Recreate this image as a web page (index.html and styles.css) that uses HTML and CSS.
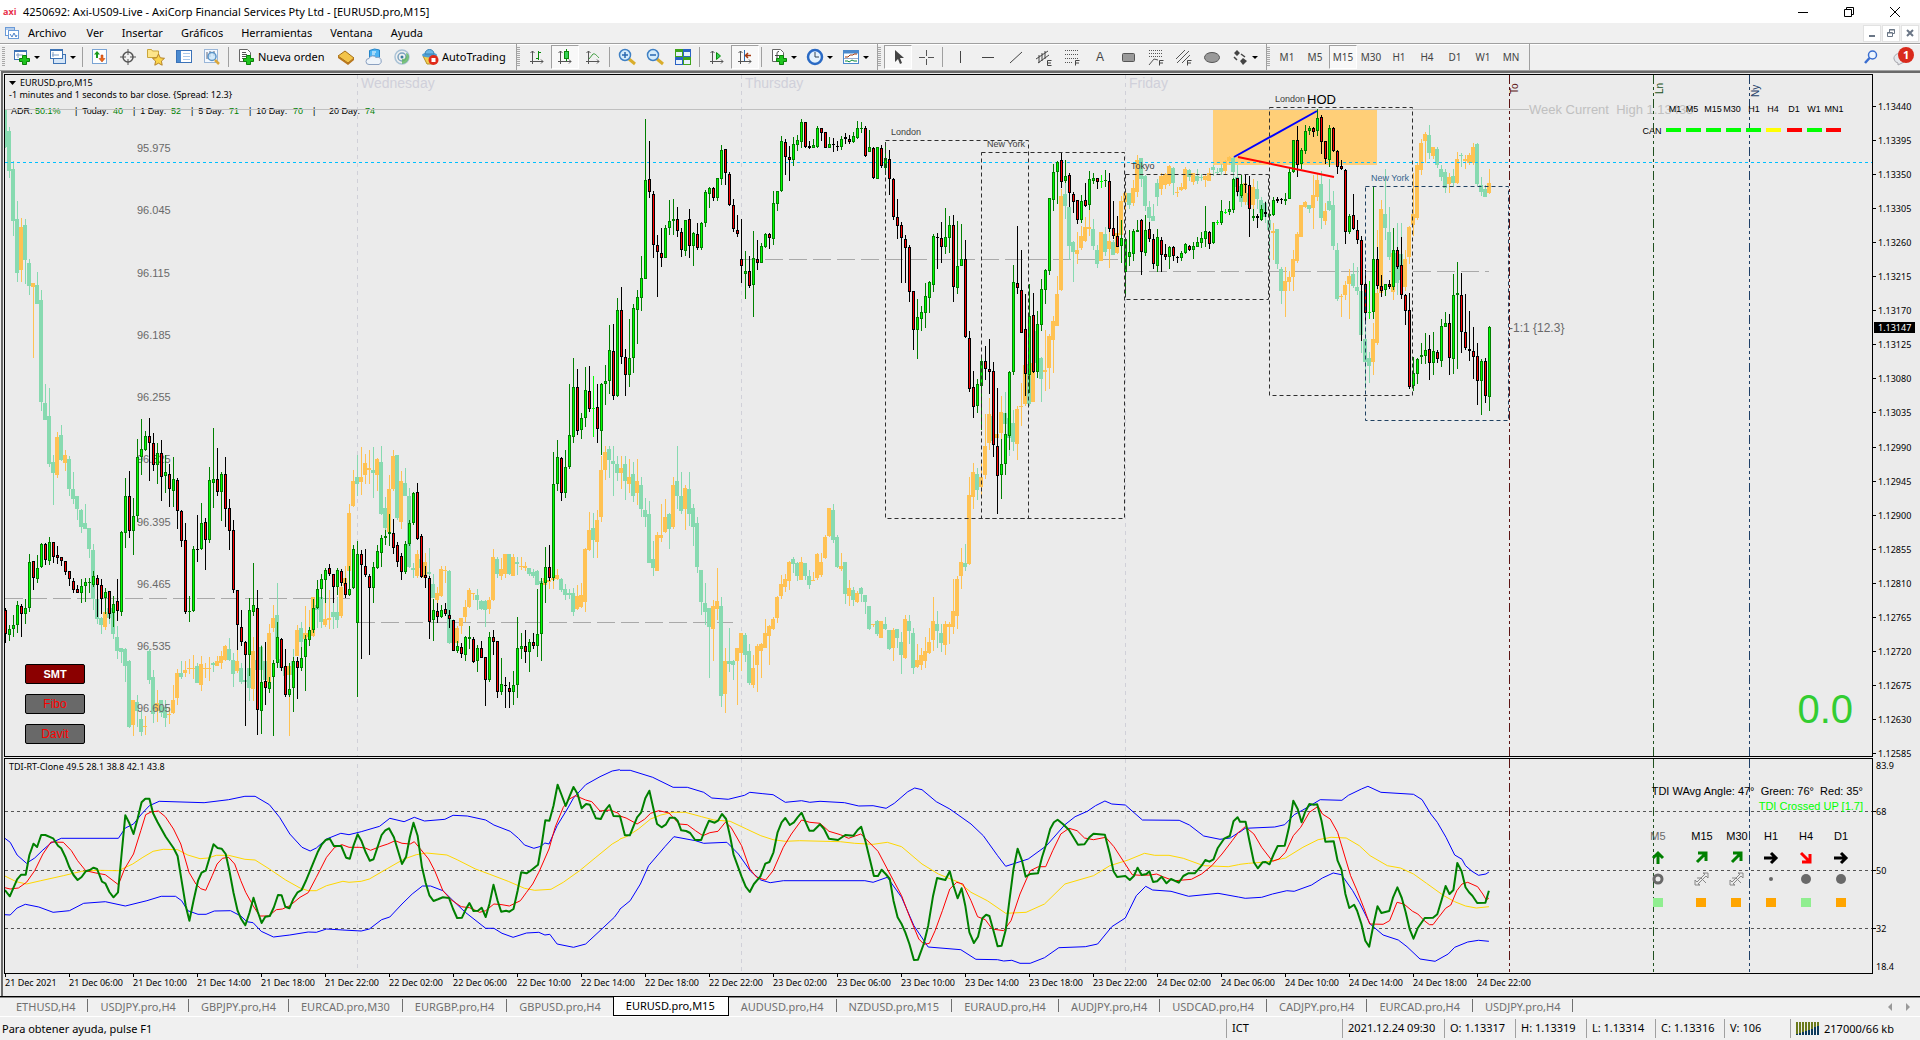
FILE: index.html
```html
<!DOCTYPE html>
<html lang="es">
<head>
<meta charset="utf-8">
<title>4250692: Axi-US09-Live - AxiCorp Financial Services Pty Ltd - [EURUSD.pro,M15]</title>
<link rel="stylesheet" href="styles.css">
</head>
<body>
<header class="titlebar">
  <span class="logo">axi</span>
  <h1>4250692: Axi-US09-Live - AxiCorp Financial Services Pty Ltd - [EURUSD.pro,M15]</h1>
  <div class="window-controls">
    <button aria-label="Minimizar"><svg width="12" height="12"><path d="M1 6.500h10" stroke="#000"/></svg></button>
    <button aria-label="Restaurar"><svg width="12" height="12"><path d="M1.500 3.500h7v7h-7zM3.500 3v-1.500h7v7h-2" fill="none" stroke="#000"/></svg></button>
    <button aria-label="Cerrar"><svg width="12" height="12"><path d="M1 1l10 10M11 1L1 11" stroke="#000"/></svg></button>
  </div>
</header>

<nav class="menubar">
  <svg class="menu-icon" width="16" height="16"><rect x="1.500" y="2.500" width="9" height="8" fill="#fff" stroke="#6b9bd8"/><path d="M1 4h10" stroke="#6b9bd8"/><rect x="4.500" y="5.500" width="10" height="8" fill="#fff" stroke="#6b9bd8"/><path d="M6 9l2 3 2-4 2 4 1-2" fill="none" stroke="#4a80c8"/></svg>
  <button>Archivo</button><button>Ver</button><button>Insertar</button><button>Gráficos</button><button>Herramientas</button><button>Ventana</button><button>Ayuda</button>
  <div class="child-controls">
    <button aria-label="Minimizar gráfico"><svg width="10" height="10"><path d="M2 8h6" stroke="#6a7686" stroke-width="2"/></svg></button>
    <button aria-label="Restaurar gráfico"><svg width="10" height="10"><path d="M1.500 4.500h5v4h-5zM3.500 4v-2.500h5v4h-2M1 5h5M3 2h6" fill="none" stroke="#6a7686"/></svg></button>
    <button aria-label="Cerrar gráfico"><svg width="10" height="10"><path d="M2 2l6 6M8 2L2 8" stroke="#6a7686" stroke-width="2"/></svg></button>
  </div>
</nav>

<div class="toolbar">
  <div class="tools first">
    <span class="grip"></span>
    <button class="drop" aria-label="Nuevo gráfico"><svg width="18" height="18"><rect x="1.500" y="2.500" width="12" height="9" fill="#fff" stroke="#3f74b5"/><path d="M1 3h13" stroke="#3f74b5" stroke-width="2"/><path d="M5 5v5M3 7h7" stroke="#7c9cc4"/><path d="M9.500 7.500h4v3h3v3h-3v3h-4v-3h-3v-3h3z" fill="#1fc41f" stroke="#0a820a"/></svg></button>
    <button class="drop" aria-label="Perfiles"><svg width="18" height="18"><rect x="4.500" y="6.500" width="12" height="9" fill="#d6e6f7" stroke="#3f74b5"/><rect x="1.500" y="1.500" width="12" height="9" fill="#fff" stroke="#3f74b5"/><path d="M1 2h13" stroke="#3f74b5" stroke-width="2"/><path d="M4 4v5M3 7h7" stroke="#7c9cc4"/></svg></button>
    <span class="sep"></span>
    <button aria-label="Observación del mercado"><svg width="18" height="18"><rect x="1.500" y="1.500" width="14" height="14" fill="#fdfefe" stroke="#7aa4d4"/><path d="M6 3l3 3.500H7V10H5V6.500H3z" fill="#1a9a1a"/><path d="M11 14l3-3.500h-2V7h-2v3.500H8z" fill="#ef6a1a" stroke="#b03a10" stroke-width=".5"/></svg></button>
    <button aria-label="Ventana de datos"><svg width="18" height="18"><circle cx="9" cy="9" r="5" fill="none" stroke="#555" stroke-width="1.500"/><path d="M9 1v6M9 11v6M1 9h6M11 9h6" stroke="#555"/></svg></button>
    <button aria-label="Navegador"><svg width="20" height="18"><path d="M1.500 9.500v-8h4l1 1.500h6v6.500z" fill="#fde58a" stroke="#c9a53a"/><path d="M12.500 6l1.800 3.800 4.200.5-3.100 2.800.8 4.100-3.700-2-3.700 2 .8-4.100-3.100-2.800 4.200-.5z" fill="#fbd54a" stroke="#b5832a"/></svg></button>
    <button aria-label="Terminal"><svg width="18" height="18"><rect x="1.500" y="2.500" width="15" height="12" fill="#fff" stroke="#3a72b8"/><rect x="2" y="3" width="4" height="11" fill="#4a8ad0"/><path d="M8 5.500h7M8 8.500h7M8 11.500h7" stroke="#a9c8ea"/></svg></button>
    <button aria-label="Probador de estrategias"><svg width="18" height="18"><rect x="1.500" y="1.500" width="13" height="13" fill="#f4f9ff" stroke="#9ab6d8"/><path d="M4 4v7M7 3v6M11 3v5" stroke="#667"/><circle cx="9" cy="8.500" r="4" fill="#cbe6fa" fill-opacity=".8" stroke="#5a94c8" stroke-width="1.500"/><path d="M12 12l4 4" stroke="#dba63a" stroke-width="2.500"/></svg></button>
    <span class="sep"></span>
    <button class="wide new-order"><svg width="18" height="18"><path d="M2.500 1.500h8l3 3v9h-11z" fill="#fff" stroke="#666"/><path d="M5 4.500h4M5 6.500h5M5 8.500h4M5 10.500h2" stroke="#555"/><path d="M9.500 7.500h4v3h3v3h-3v3h-4v-3h-3v-3h3z" fill="#1fc41f" stroke="#0a820a"/></svg>Nueva orden</button>
    <button aria-label="MetaEditor"><svg width="18" height="18"><path d="M1 8l7-5 9 7-6 5z" fill="#f3c44a" stroke="#a46f16"/><path d="M1 8l10 7 6-5v2l-6 5L1 10z" fill="#b9761c"/></svg></button>
    <button aria-label="VPS"><svg width="18" height="18"><path d="M4.500 2.500l5-1.500 5 1v9h-10z" fill="#4bb4f4" stroke="#2484c8"/><path d="M7 4h4M7 6h3" stroke="#fff"/><path d="M4 16.500a3 3 0 010-6 4 4 0 017-1 3.500 3.500 0 013 7z" fill="#eef4fa" stroke="#8aa0c0"/></svg></button>
    <button aria-label="Señales"><svg width="18" height="18"><circle cx="9" cy="9" r="7" fill="none" stroke="#a9c2d6" stroke-width="1.500"/><circle cx="9" cy="9" r="4" fill="none" stroke="#7ca3c0" stroke-width="1.500"/><path d="M9 9v7a8 8 0 007-7c0-3-2-4-3-4 1 5-1 6-4 6z" fill="#5fb65f" fill-opacity=".8"/><circle cx="9" cy="9" r="1.500" fill="#3a7a9a"/></svg></button>
    <button class="wide auto"><svg width="18" height="18"><path d="M2 8h14l-4 8H6z" fill="#f1cf50" stroke="#b48f26"/><ellipse cx="8.500" cy="7" rx="7.500" ry="2.500" fill="#4e9fd4"/><path d="M4 6c0-6 9-6 9 0z" fill="#6cb8e6" stroke="#3b82b4"/><circle cx="12.500" cy="12" r="5" fill="#e02a1a"/><rect x="10.500" y="10" width="4" height="4" fill="#fff"/></svg>AutoTrading</button>
  </div>
  <div class="tools">
    <span class="grip"></span>
    <button aria-label="Gráfico de barras"><svg width="18" height="18"><path d="M4.500 3v13M2 13.500h13M2.500 5l2-2 2 2M13 11.500l2 2-2 2" fill="none" stroke="#555"/><path d="M10.500 3v9M10 4.500h3M8 10.500h3" stroke="#0a8a0a"/></svg></button>
    <button class="pressed" aria-label="Velas japonesas"><svg width="18" height="18"><path d="M4.500 3v13M2 13.500h13M2.500 5l2-2 2 2M13 11.500l2 2-2 2" fill="none" stroke="#555"/><path d="M10.500 1v12" stroke="#0a8a0a"/><rect x="8.500" y="3.500" width="4" height="7" fill="#35d055" stroke="#0a8a0a"/></svg></button>
    <button aria-label="Gráfico de líneas"><svg width="18" height="18"><path d="M4.500 3v13M2 13.500h13M2.500 5l2-2 2 2M13 11.500l2 2-2 2" fill="none" stroke="#555"/><path d="M5 11l4-5c2-1 4 2 6 4" fill="none" stroke="#3a9a3a"/></svg></button>
    <span class="sep"></span>
    <button aria-label="Acercar"><svg width="18" height="18"><path d="M11 11l6 5" stroke="#d9ad2c" stroke-width="3"/><circle cx="7" cy="7" r="5.500" fill="#d4ecfb" stroke="#3f80c4" stroke-width="1.500"/><path d="M4 7h6M7 4v6" stroke="#2868b0" stroke-width="1.500"/></svg></button>
    <button aria-label="Alejar"><svg width="18" height="18"><path d="M11 11l6 5" stroke="#d9ad2c" stroke-width="3"/><circle cx="7" cy="7" r="5.500" fill="#d4ecfb" stroke="#3f80c4" stroke-width="1.500"/><path d="M4 7h6" stroke="#2868b0" stroke-width="1.500"/></svg></button>
    <button aria-label="Mosaico"><svg width="18" height="18"><path d="M1 1h8v8H1zM9 9h8v8H9z" fill="#3fa31c"/><path d="M9 1h8v8H9zM1 9h8v8H1z" fill="#2a62c4"/><path d="M2 4h6v4H2zM10 4h6v4h-6zM2 12h6v4H2zM10 12h6v4h-6z" fill="#e9f2fb"/></svg></button>
    <span class="sep"></span>
    <button aria-label="Desplazamiento automático"><svg width="18" height="18"><path d="M4.500 3v13M2 13.500h13M2.500 5l2-2 2 2M13 11.500l2 2-2 2" fill="none" stroke="#555"/><path d="M8.500 4.500l4 3.500-4 3.500z" fill="#35d055" stroke="#0a8a0a"/></svg></button>
    <button class="pressed" aria-label="Desplazar gráfico"><svg width="18" height="18"><path d="M4.500 3v13M2 13.500h13M2.500 5l2-2 2 2M13 11.500l2 2-2 2" fill="none" stroke="#555"/><path d="M8.500 2v11" stroke="#2a6ab0"/><path d="M15 7.500h-5M12 5l-2.500 2.500L12 10" fill="none" stroke="#a33a10" stroke-width="1.500"/></svg></button>
    <span class="sep"></span>
    <button class="drop" aria-label="Indicadores"><svg width="18" height="18"><path d="M2.500 1.500h8l3 3v9h-11z" fill="#fff" stroke="#666"/><path d="M9 3.500c-2 0-2 1-2 3v5M5 7.500h4" fill="none" stroke="#444"/><path d="M9.500 7.500h4v3h3v3h-3v3h-4v-3h-3v-3h3z" fill="#1fc41f" stroke="#0a820a"/></svg></button>
    <button class="drop" aria-label="Períodos"><svg width="18" height="18"><circle cx="9" cy="9" r="7" fill="#e4f2fd" stroke="#2a6ac4" stroke-width="2.500"/><path d="M9 4v5h4" fill="none" stroke="#345"/></svg></button>
    <button class="drop" aria-label="Plantillas"><svg width="18" height="18"><rect x="1.500" y="2.500" width="15" height="13" fill="#fff" stroke="#4a88cc"/><path d="M1 4h16" stroke="#4a88cc" stroke-width="3"/><path d="M3 9h3l2-2h3l1-1h3" fill="none" stroke="#a33a10"/><path d="M2 10.500h14" stroke="#9ac"/><path d="M3 13h3l1 1 3-2 2 1h3" fill="none" stroke="#0a8a3a"/></svg></button>
  </div>
  <div class="tools">
    <span class="grip"></span>
    <button class="pressed" aria-label="Cursor"><svg width="18" height="18"><path d="M6 2v12l3-3 2 5 2-1-2-5h4z" fill="#444"/></svg></button>
    <button aria-label="Cruz"><svg width="18" height="18"><path d="M9.500 2v6M9.500 11v6M2 9.500h6M11 9.500h6" stroke="#555"/></svg></button>
    <span class="sep"></span>
    <button aria-label="Línea vertical"><svg width="18" height="18"><path d="M9.500 3v12" stroke="#444"/></svg></button>
    <button aria-label="Línea horizontal"><svg width="18" height="18"><path d="M3 9.500h12" stroke="#444"/></svg></button>
    <button aria-label="Línea de tendencia"><svg width="18" height="18"><path d="M3 15L15 4" stroke="#444"/></svg></button>
    <button aria-label="Canal equidistante"><svg width="18" height="18"><path d="M1 11L13 3M3 15l11-8M4 7v8M7 5v8M10 3v8" stroke="#444"/><path d="M16.500 12.500h-4v5h4M12 15h4" fill="none" stroke="#444"/></svg></button>
    <button aria-label="Retroceso de Fibonacci"><svg width="18" height="18"><path d="M2 2.500h13M2 6.500h13M2 10.500h13M2 14.500h8" stroke="#555" stroke-dasharray="1 1"/><path d="M16.500 12.500h-4v5M12 15h4" fill="none" stroke="#444"/></svg></button>
    <button class="letter">A</button>
    <button aria-label="Rectángulo"><svg width="18" height="18"><rect x="3.500" y="5.500" width="12" height="8" rx="1" fill="#999" stroke="#555"/></svg></button>
    <button aria-label="Abanico de Fibonacci"><svg width="18" height="18"><path d="M2 2.500h14M2 5.500h14M2 8.500h14" stroke="#555" stroke-dasharray="1 1"/><path d="M2 17l5-6 4 1" fill="none" stroke="#555"/><path d="M16.500 12.500h-4v5M12 15h4" fill="none" stroke="#444"/></svg></button>
    <button aria-label="Canales de Fibonacci"><svg width="18" height="18"><path d="M1 11L10 2M2 15L14 3M7 15l8-8" stroke="#555"/><path d="M16.500 12.500h-4v5M12 15h4" fill="none" stroke="#444"/></svg></button>
    <button aria-label="Elipse"><svg width="18" height="18"><ellipse cx="9" cy="9.500" rx="7.500" ry="5" fill="#999" stroke="#555"/></svg></button>
    <button class="drop" aria-label="Flechas"><svg width="18" height="18"><path d="M6 2l3 3-3 3-3-3zM12 10l4 3-4 4-3-4z" fill="#444"/><path d="M3 9l3 3M10 6l4 3" stroke="#444" stroke-width="1.500"/></svg></button>
  </div>
  <div class="tools periods">
    <span class="grip"></span>
    <button>M1</button><button>M5</button><button class="pressed">M15</button><button>M30</button><button>H1</button><button>H4</button><button>D1</button><button>W1</button><button>MN</button>
  </div>
  <div class="tools-end">
    <button aria-label="Buscar"><svg width="16" height="16"><circle cx="9.500" cy="6" r="4" fill="#eef6ff" stroke="#3a6ed0" stroke-width="1.500"/><path d="M6.500 9l-4.500 5" stroke="#3a6ed0" stroke-width="2.500"/></svg></button>
    <button class="chat" aria-label="Mensajes"><svg width="22" height="22"><path d="M2 13a6 5 0 1110 3l-6 3v-2a5 5 0 01-4-4z" fill="#e6e8ec" stroke="#a6a6ac"/><circle cx="14" cy="9" r="8" fill="#d92a1c"/></svg><span>1</span></button>
  </div>
</div>

<main class="workspace">
  <section class="plot price-plot" aria-label="EURUSD.pro,M15">
    <svg class="canvas" id="price">
      <g transform="translate(-5 -75)">
        <g class="day-lines"><path d="M357.500 75v683M741.500 75v683M1125.500 75v683"/></g>
        <g class="day-names"><text x="361" y="88">Wednesday</text><text x="745" y="88">Thursday</text><text x="1129" y="88">Friday</text></g>
        <rect class="zone" x="1213" y="110" width="164" height="55"/>
        <path class="opens" d="M5 598.500h345M357 622.500h376M741 259.500h377M1125 271.500h364"/>
        <g class="adr">
          <text x="11" y="114">ADR:</text><text class="up" x="35" y="114">50.1%</text>
          <text x="75" y="114">|&#160; Today:</text><text class="up" x="113" y="114">40</text>
          <text x="133" y="114">|&#160; 1 Day:</text><text class="up" x="171" y="114">52</text>
          <text x="191" y="114">|&#160; 5 Day:</text><text class="up" x="229" y="114">71</text>
          <text x="249" y="114">|&#160; 10 Day:</text><text class="up" x="293" y="114">70</text>
          <text x="313" y="114">|</text><text x="329" y="114">20 Day:</text><text class="up" x="365" y="114">74</text>
        </g>
        <g id="secondary"></g>
        <path class="week-high" d="M5 109.500h1524"/>
        <path class="index-level" d="M5 162.500h1868"/>
        <g class="index-scale" id="index-scale"></g>
        <g id="primary"></g>
        <g class="sessions">
          <rect x="885.500" y="140.500" width="143" height="378"/>
          <rect x="981.500" y="152.500" width="143" height="366"/>
          <rect x="1125.500" y="174.500" width="143" height="125"/>
          <rect x="1269.500" y="107.500" width="143" height="288"/>
          <rect class="current" x="1365.500" y="186.500" width="143" height="234"/>
        </g>
        <g class="session-names">
          <text x="891" y="135">London</text><text x="987" y="147">New York</text><text x="1131" y="169">Tokyo</text>
          <text x="1275" y="102">London</text><text class="current" x="1371" y="181">New York</text>
        </g>
        <text class="hod" x="1307" y="104">HOD</text>
        <path class="trend-up" d="M1234 157l83-46"/>
        <path class="trend-down" d="M1238 157l96 20"/>
        <text class="week-name" x="1529" y="114">Week Current&#160; High 1.13438</text>
        <text class="countdown" x="1509" y="332">-1:1 {12.3}</text>
        <g class="openings">
          <path class="tokyo" d="M1509.500 75v683"/><path class="london" d="M1653.500 75v683"/><path class="newyork" d="M1749.500 75v683"/>
          <text class="tokyo" transform="translate(1518 94) rotate(-90)">To</text>
          <text class="london" transform="translate(1663 94) rotate(-90)">Ln</text>
          <text class="newyork" transform="translate(1759 97) rotate(-90)">Ny</text>
        </g>
        <g class="matrix">
          <text x="1675" y="112">M1</text><text x="1692" y="112">M5</text><text x="1713" y="112">M15</text><text x="1732" y="112">M30</text><text x="1754" y="112">H1</text><text x="1773" y="112">H4</text><text x="1794" y="112">D1</text><text x="1814" y="112">W1</text><text x="1834" y="112">MN1</text>
          <text x="1652" y="134">CAN</text>
          <path stroke="#00ff00" d="M1666 130h15M1686 130h15M1706 130h15M1726 130h15M1746 130h15M1807 130h15"/>
          <path stroke="#ffff00" d="M1766 130h15"/>
          <path stroke="#ff0000" d="M1787 130h15M1826 130h15"/>
        </g>
        <text class="big-zero" x="1853" y="723">0.0</text>
      </g>
    </svg>
    <div class="caption">
      <p class="symbol"><svg width="7" height="5"><path d="M0 0h7L3.500 4z"/></svg>EURUSD.pro,M15</p>
      <p>-1 minutes and 1 seconds to bar close. {Spread: 12.3}</p>
    </div>
    <div class="chart-buttons">
      <button class="smt">SMT</button><button>Fibo</button><button>Davit</button>
    </div>
  </section>
  <svg class="axis" id="price-axis"></svg>

  <section class="plot" aria-label="TDI-RT-Clone">
    <svg class="canvas" id="tdi">
      <g transform="translate(-5 -760)">
        <g class="day-lines"><path d="M357.500 765v208M741.500 760v213M1125.500 760v213"/></g>
        <path class="levels" d="M5 812.500h1868M5 871.500h1868M5 929.500h1868"/>
        <g class="openings"><path class="tokyo" d="M1509.500 760v214"/><path class="london" d="M1653.500 760v214"/><path class="newyork" d="M1749.500 760v214"/></g>
        <g id="tdi-lines"></g>
        <g class="readings">
          <text x="1863" y="796">TDI WAvg Angle: 47°&#160; Green: 76°&#160; Red: 35°</text>
          <text class="cross" x="1863" y="811">TDI Crossed UP [1.7]</text>
        </g>
        <g class="frames">
          <text class="off" x="1658" y="841">M5</text><text x="1702" y="841">M15</text><text x="1737" y="841">M30</text><text x="1771" y="841">H1</text><text x="1806" y="841">H4</text><text x="1841" y="841">D1</text>
        </g>
        <g class="arrows">
          <path stroke="#008000" d="M1658 865v-11M1653 859l5-5 5 5"/>
          <path stroke="#008000" d="M1697 863l8-8M1698 854h8v8M1732 863l8-8M1733 854h8v8"/>
          <path stroke="#000" d="M1764 859h12M1771 854l5 5-5 5M1834 859h12M1841 854l5 5-5 5"/>
          <path stroke="#f00" d="M1801 854l8 8M1802 863h8v-8"/>
        </g>
        <g fill="#696969">
          <circle cx="1658" cy="880" r="4" fill="none" stroke="#696969" stroke-width="3"/>
          <path fill="none" stroke="#888" d="M1695 886v-5l2 2 8-8-2-1h5v5l-2-2-8 8 2 1zM1697 879h4l5 5M1730 886v-5l2 2 8-8-2-1h5v5l-2-2-8 8 2 1zM1732 879h4l5 5"/>
          <circle cx="1771" cy="880" r="2"/><circle cx="1806" cy="880" r="5"/><circle cx="1841" cy="880" r="5"/>
        </g>
        <path fill="#90ee90" d="M1653 899h10v9h-10zM1801 899h10v9h-10z"/>
        <path fill="#ffa500" d="M1696 899h10v9h-10zM1731 899h10v9h-10zM1766 899h10v9h-10zM1836 899h10v9h-10z"/>
      </g>
    </svg>
    <p class="caption">TDI-RT-Clone 49.5 28.1 38.8 42.1 43.8</p>
  </section>
  <svg class="axis" id="tdi-axis">
    <g transform="translate(-1873 -759)"><text x="1876" y="770">83.9</text><text x="1876" y="816">68</text><text x="1876" y="875">50</text><text x="1876" y="933">32</text><text x="1876" y="971">18.4</text><path d="M1873 812.500h3M1873 871.500h3M1873 929.500h3"/></g>
  </svg>

  <ol class="time-axis">
    <li>21 Dec 2021</li><li>21 Dec 06:00</li><li>21 Dec 10:00</li><li>21 Dec 14:00</li><li>21 Dec 18:00</li><li>21 Dec 22:00</li><li>22 Dec 02:00</li><li>22 Dec 06:00</li><li>22 Dec 10:00</li><li>22 Dec 14:00</li><li>22 Dec 18:00</li><li>22 Dec 22:00</li><li>23 Dec 02:00</li><li>23 Dec 06:00</li><li>23 Dec 10:00</li><li>23 Dec 14:00</li><li>23 Dec 18:00</li><li>23 Dec 22:00</li><li>24 Dec 02:00</li><li>24 Dec 06:00</li><li>24 Dec 10:00</li><li>24 Dec 14:00</li><li>24 Dec 18:00</li><li>24 Dec 22:00</li>
  </ol>
</main>

<nav class="tabs">
  <button>ETHUSD,H4</button><button>USDJPY.pro,H4</button><button>GBPJPY.pro,H4</button><button>EURCAD.pro,M30</button><button>EURGBP.pro,H4</button><button>GBPUSD.pro,H4</button><button class="active">EURUSD.pro,M15</button><button>AUDUSD.pro,H4</button><button>NZDUSD.pro,M15</button><button>EURAUD.pro,H4</button><button>AUDJPY.pro,H4</button><button>USDCAD.pro,H4</button><button>CADJPY.pro,H4</button><button>EURCAD.pro,H4</button><button>USDJPY.pro,H4</button>
  <div class="tab-scroll">
    <button aria-label="Anterior"><svg width="5" height="8"><path d="M5 0v8L1 4z" fill="#999"/></svg></button>
    <button aria-label="Siguiente"><svg width="5" height="8"><path d="M0 0v8l4-4z" fill="#999"/></svg></button>
  </div>
</nav>

<footer class="status">
  <span class="help">Para obtener ayuda, pulse F1</span>
  <span class="cell profile">ICT</span>
  <span class="cell date">2021.12.24 09:30</span>
  <span class="cell open">O: 1.13317</span>
  <span class="cell open">H: 1.13319</span>
  <span class="cell quote">L: 1.13314</span>
  <span class="cell quote">C: 1.13316</span>
  <span class="cell volume">V: 106</span>
  <span class="cell link"><svg width="24" height="13"><path d="M1 0v12M4 0v11M7 0v10M10 0v9M13 0v8M16 0v7M19 0v5M22 0v4" stroke="#6b7a1c" stroke-width="2"/><path d="M1 12v1M4 11v2M7 10v3M10 9v4M13 8v5M16 7v6M19 5v8M22 4v9" stroke="#0d3a5c" stroke-width="2"/></svg>217000/66 kb</span>
</footer>
<script src="chart.js"></script>
</body>
</html>
```

FILE: styles.css
```css
* { box-sizing: border-box; }
body { margin: 0; height: 100vh; display: flex; flex-direction: column; overflow: hidden; background: #f0f0f0; color: #000; font: 11px/16px "Noto Sans", "Open Sans", sans-serif; }
button { margin: 0; padding: 0; border: 0; background: none; font: inherit; color: inherit; }
h1, p, ol { margin: 0; padding: 0; font: inherit; list-style: none; }
svg { display: block; flex: none; }

.titlebar { display: flex; align-items: center; height: 23px; padding-left: 3px; background: #fff; }
.logo { width: 20px; color: #e8304a; font: bold 9px/12px "Open Sans", sans-serif; }
.window-controls { display: flex; margin-left: auto; padding-right: 2px; }
.window-controls button { display: grid; place-items: center; width: 46px; height: 22px; }

.menubar { display: flex; align-items: center; height: 20px; padding-left: 4px; }
.menubar > button { padding: 0 9px; }
.menu-icon { margin-right: 1px; }
.menu-icon + button { padding-left: 7px; padding-right: 11px; }
.child-controls { display: flex; gap: 1px; margin-left: auto; padding-right: 1px; }
.child-controls button { display: grid; place-items: center; width: 18px; height: 17px; background: #fff; border: 1px solid #e2e2e2; }

.toolbar { display: flex; height: 28px; border-top: 1px solid #a0a0a0; border-bottom: 1px solid #a0a0a0; box-shadow: inset 0 1px #fff; }
.tools { display: flex; align-items: center; padding-right: 4px; border-right: 1px solid #a0a0a0; }
.tools.first { padding-left: 2px; }
.grip { width: 3px; height: 20px; margin-right: 3px; background: repeating-linear-gradient(#a8a8a8 0 1px, #f0f0f0 1px 2px); }
.sep { width: 1px; height: 20px; margin: 0 3px 0 2px; background: #a0a0a0; }
.tools button { display: flex; align-items: center; justify-content: center; width: 28px; height: 24px; color: #444; }
.tools .drop { width: 36px; justify-content: flex-start; gap: 3px; padding-left: 5px; }
.tools .drop::after { content: ""; border: 3px solid transparent; border-top-color: #000; border-bottom: 0; }
.tools .wide { justify-content: flex-start; gap: 3px; padding-left: 5px; color: #000; white-space: nowrap; }
.tools .new-order { width: 100px; }
.tools .auto { width: 96px; }
.tools .pressed { background: #f8f8f8; border: 1px solid #a0a0a0; border-right-color: #fff; border-bottom-color: #fff; }
.tools .letter { font: 12px/16px "Liberation Sans", sans-serif; }
.periods button { font-size: 10px; }
.tools-end { display: flex; align-items: center; gap: 13px; margin-left: auto; padding-right: 6px; }
.chat { position: relative; }
.chat span { position: absolute; left: 11px; top: 1px; color: #fff; font-weight: bold; }

.workspace { flex: 1; min-height: 0; display: grid; grid-template: minmax(0, 1fr) 216px 21px / minmax(0, 1fr) 47px; row-gap: 1px; margin-left: 1px; padding: 1px 0 0 1px; border-left: 2px solid #696969; border-top: 2px solid #696969; background: #ebebeb; }
.workspace .time-axis { margin-top: -1px; }
.plot { position: relative; border: 1px solid #000; overflow: hidden; }
.canvas { width: 100%; height: 100%; }
.axis { width: 47px; height: 100%; overflow: visible; }
.axis text, .time-axis { font: 9px/12px "Noto Sans", sans-serif; }
.axis path { stroke: #000; }
.axis .price-tag { fill: #000; }
.axis .price-now { fill: #fff; }
.caption { position: absolute; left: 4px; top: 2px; font: 9px/12px "Noto Sans", sans-serif; }
.symbol { display: flex; align-items: center; gap: 4px; }
.chart-buttons { position: absolute; left: 20px; bottom: 12px; display: flex; flex-direction: column; gap: 10px; }
.chart-buttons button { width: 60px; height: 20px; border: 1px solid #000; border-radius: 2px; background: #696969; color: #f00; font: 12px/16px "Liberation Sans", sans-serif; }
.chart-buttons .smt { background: #8b0000; color: #fff; font-weight: bold; font-size: 11px; }

.canvas text { font-family: "Liberation Sans", sans-serif; }
.day-lines { fill: none; stroke: #d0d0d8; stroke-dasharray: 4 4; }
.day-names { fill: #d0d0da; font-size: 14px; }
.zone { fill: #ffcf78; }
.opens { fill: none; stroke: #a9a9a9; stroke-dasharray: 18 6; }
.adr { font-size: 9px; }
.adr .up { fill: #008000; }
.week-high { stroke: #c0c0c0; }
.week-name { fill: #c0c0c0; font-size: 13px; }
.index-level { stroke: #00bfff; stroke-dasharray: 3 3; }
.index-scale { fill: #696969; font-size: 11px; }
.sessions { fill: none; stroke: #2f2f2f; stroke-dasharray: 4 3; }
.sessions .current { stroke: #1f4060; }
.session-names { fill: #404040; font-size: 9px; }
.session-names .current { fill: #36648b; }
.hod { font-size: 13px; }
.trend-up { stroke: #00f; stroke-width: 2; }
.trend-down { stroke: #f00; stroke-width: 2; }
.countdown { fill: #696969; font-size: 12px; }
.openings path { fill: none; stroke-dasharray: 9 3 3 3 3 3; }
.openings text { font-size: 10px; }
path.tokyo { stroke: #5c1414; } text.tokyo { fill: #5c1414; }
path.london { stroke: #205020; } text.london { fill: #205020; }
path.newyork { stroke: #1f4068; } text.newyork { fill: #1f4068; }
.matrix text { font-size: 9px; text-anchor: middle; }
.matrix path { stroke-width: 4; }
.big-zero { fill: #32cd32; font-size: 40px; text-anchor: end; }
.bars { shape-rendering: crispEdges; }
.levels { fill: none; stroke: #555; stroke-dasharray: 3 3; }
.readings text { font-size: 11px; text-anchor: end; }
.readings .cross { fill: #00ff00; }
.frames { font-size: 11px; text-anchor: middle; }
.frames .off { fill: #696969; }
.arrows { fill: none; stroke-width: 3; }
.curve { fill: none; stroke-width: 1; stroke-linejoin: round; }
.curve.rsi { stroke-width: 2; }

.time-axis { grid-column: 1 / -1; display: flex; padding-left: 1px; }
.time-axis li { width: 64px; flex: none; white-space: nowrap; }
.time-axis li::before { content: ""; display: block; width: 1px; height: 3px; background: #000; }

.tabs { display: flex; height: 21px; padding-left: 4px; border-top: 1px solid #000; border-bottom: 1px solid #fff; box-shadow: inset 0 1px #888; color: #707070; }
.tabs > button { position: relative; padding: 0 13px 0 12px; line-height: 16px; white-space: nowrap; }
.tabs > button::after { content: ""; position: absolute; right: 0; top: 2px; width: 1px; height: 13px; background: #707070; }
.tabs > .active { background: #fff; border: 1px solid #000; border-top: 0; color: #000; margin-left: -1px; }
.tabs > .active::after { display: none; }
.tab-scroll { display: flex; align-items: center; gap: 14px; margin-left: auto; padding-right: 9px; }

.status { display: flex; align-items: center; height: 23px; padding-left: 2px; }
.help { flex: 1; }
.cell { height: 19px; padding-left: 5px; border-left: 1px solid #a0a0a0; line-height: 18px; white-space: nowrap; }
.profile { width: 116px; }
.date { width: 102px; }
.open { width: 71px; }
.quote { width: 69px; }
.volume { width: 66px; }
.link { display: flex; align-items: center; gap: 4px; width: 130px; }
```

FILE: chart.js
```js
// Bars are listed as "<kind> high top bottom low"; each block carries its own vertical origin and scale.
// g = rising, r = falling, d = unchanged, o = correlated rising, m = correlated falling.
const primary = [
  { first: 0, y: 110, k: 2.412, bars: `r1200 1205 1265 1285;g1242 1252 1266 1280;g1218 1242 1252 1270;g1185 1194 1242 1262;r1192 1196 1215 1270;g1180 1200 1215 1240;g1070 1090 1200 1212;r1088 1088 1130 1158;g1073 1105 1132 1140;g1045 1046 1103 1105;r1045 1047 1085 1097;g1030 1043 1087 1098;r1042 1043 1077 1092;r1052 1074 1080 1095;r1078 1079 1088 1100;r1088 1089 1114 1122;r1111 1113 1132 1148;r1130 1136 1158 1166;r1145 1155 1164 1166;g1132 1147 1164 1190;g1130 1138 1147 1186;g1128 1138 1142 1165;g1112 1125 1145 1150;r1122 1128 1145 1223;r1132 1146 1180 1215;g1153 1163 1178 1215;r1160 1160 1215 1228;g1172 1192 1214 1246;r1132 1184 1209 1232;g1015 1018 1210 1220;g888 932 1020 1057;r870 930 1015 1032;g937 980 1015 1073;g794 836 980 993;g745 818 838 880;g774 787 820 822;r743 787 802 894;r778 802 856 870;g802 828 856 902;r795 828 885 942;g832 874 882 924;r855 877 915 957;g836 890 918 958;r888 893 968 1010;r965 967 1040 1053;r996 1036 1212 1216;g1172 1209 1212 1234;g1052 1058 1208 1212;r976 1059 1062 1090;g947 996 1060 1062;r983 994 1036 1110;g860 893 1036 1045;g767 890 900 960;r815 890 922 930;g873 879 922 992;r838 878 962 1005;r938 960 1015 1062;r988 1014 1158 1165;r1158 1158 1242 1302;r1206 1246 1284 1292;r1280 1282 1315 1485;g1177 1206 1315 1365;g1093 1194 1212 1220;r1157 1200 1448 1508;g1292 1380 1450 1505;r1282 1378 1393 1435;g1368 1380 1396 1406;g1327 1335 1367 1510;g1235 1270 1335 1345;r1273 1275 1345 1352;r1300 1342 1412 1416;g1334 1396 1410 1415;g1320 1328 1394 1452;r1320 1330 1347 1420;g1295 1322 1347 1352;g1266 1276 1320 1402;g1246 1254 1278 1294;g1180 1200 1254 1262;g1133 1156 1200 1204;g1120 1132 1155 1180;g1104 1110 1134 1188;r1095 1104 1118 1125;r1118 1119 1150 1188;g1104 1110 1150 1170;r1108 1111 1140 1148;r1128 1140 1170 1178;g1100 1156 1170 1172;g1050 1058 1154 1156;g1040 1072 1238 1415;r1062 1072 1098 1324;r1060 1100 1122 1126;r1120 1124 1152 1315;g1090 1102 1152 1190;g1050 1064 1104 1106;g1026 1032 1068 1102;g1014 1028 1033 1050;g975 1018 1022 1052;r987 1020 1056 1070;r1042 1050 1090 1102;r1068 1076 1115 1134;g1040 1046 1115 1120;g988 996 1048 1052;g922 924 996 1000;r900 922 1034 1036;r1022 1028 1126 1130;r1100 1122 1128 1152;r1124 1128 1234 1276;g1180 1206 1230 1280;r1188 1208 1222 1238;g1195 1205 1222 1226;r1190 1204 1215 1220;r1205 1218 1227 1250;r1230 1230 1304 1306;g1280 1294 1304 1310;r1286 1296 1313 1322;g1268 1272 1315 1330;g1245 1272 1276 1300;r1272 1275 1332 1335;g1290 1298 1330 1355;r1280 1298 1322 1322;r1320 1320 1374 1438;g1260 1270 1374 1380;r1255 1270 1282 1315;r1280 1281 1404 1418;g1322 1385 1404 1410;r1368 1388 1390 1442;r1380 1395 1403 1443;g1352 1386 1404 1436;g1222 1298 1388 1418;g1262 1292 1300 1325;r1255 1293 1308 1335;g1275 1282 1308 1356;r1262 1282 1292 1300;g1155 1265 1292 1320;g1130 1140 1265 1328;g1055 1103 1140 1190;r1050 1103 1130 1136;g825 902 1130 1135;g795 838 902 920;r838 840 925 942;g820 862 924 935;g660 785 860 865;g598 667 788 802;r625 667 774 783;g730 744 772 794;g620 676 744 765;r618 678 720 728;d642 718 720 788;r660 716 769 802` },
  { first: 149, y: 90, k: 2.529, bars: `g740 744 862 922;g695 736 744 797;g594 658 736 768;r592 660 775 783;g526 556 775 776;r498 556 674 694;r655 676 722 775;g580 678 720 752;g541 551 678 715;g506 524 556 642;g420 476 525 560;g73 228 477 478;r129 226 258 272;r255 262 392 425;r367 392 410 523;r348 411 425 447;g341 349 425 426;g278 331 348 367;g276 326 331 366;r295 327 357 372;r350 358 404 422;g330 330 406 421;r301 325 395 425;g360 362 395 444;r336 364 399 404;g333 336 399 405;g254 258 336 346;g245 247 262 298;r245 247 272 280;g222 222 272 280;g139 152 225 240;r148 148 211 240;r208 212 290 294;r276 292 352 358;r317 353 365 373;r325 427 444 487;g407 458 465 528;r420 458 495 502;g357 426 493 574;r380 428 437 455;g387 395 437 438;g362 364 396 400;r362 363 374 402;g256 286 378 392;g255 256 288 305;g116 129 256 258;r124 131 169 216;r142 170 177 230;g119 137 177 193;g114 126 140 154;g73 81 131 147;r81 82 144 146;r130 142 147 149;g125 140 146 147;g91 97 145 146;r96 97 109 130;r106 107 146 147;g120 137 146 147;r121 137 139 157;r128 141 145 154;g117 124 144 152;r110 119 124 137;r114 124 131 136;g107 116 132 134;g78 96 122 124;g81 95 97 110;r90 96 167 169;g101 145 156 157;r144 147 223 225;g144 145 224 225;r139 147 193 196;g132 172 196 216;r152 175 224 265;r223 224 320 328;r276 321 343 378;r333 342 374 487;r367 378 400 487;r392 397 512 537;r508 509 606 657;g529 574 606 680;g546 562 578 609;g488 521 565 602;g483 486 525 563;g364 369 493 511;r362 372 375 453;r334 374 397 438;g298 373 397 414;g318 342 374 413;r316 342 499 536;g331 444 502 516;g338 427 444 445;r379 427 625 627;r609 626 755 764;r711 752 801 829;g730 744 798 818;g675 685 748 860;r647 685 705 733;r630 706 712 768;r688 711 899 928;r753 900 976 1072;g882 946 973 1034;g818 870 946 974;g710 712 875 910;g443 486 712 720;r344 488 500 517;r405 506 614 615;r517 604 718 774;g490 572 720 766;r513 570 712 715;g558 592 712 728;g477 503 594 609;g453 454 507 542;g272 274 457 468;g188 207 277 306;g180 181 208 288;r158 178 232 247;g177 217 230 235;r211 215 260 296;r257 264 282 310;r277 278 328 340;g265 281 329 336;r235 278 294 296;g204 226 291 304;g211 223 231 237;r223 223 232 250` },
  { first: 274, y: 80, k: 3, bars: `d285 302 303 323;g270 300 303 322;r278 303 446 455;r362 445 468 477;r408 468 500 502;g420 475 498 548;g475 478 575 643;g450 516 530 558;g448 454 522 543;g420 450 456 457;r417 419 517 584;g406 450 518 527;r427 448 478 486;r463 478 553 566;g448 472 557 575;r472 481 524 575;r492 522 530 540;g498 500 532 566;r498 500 529 542;r528 530 534 548;g514 519 534 543;g489 493 518 521;r494 497 511 514;g487 498 511 537;g472 487 500 500;g455 475 489 504;g379 454 476 500;r453 455 491 506;g425 427 489 491;d420 427 428 435;g360 393 430 434;d387 397 398 402;g364 387 397 406;g294 297 389 398;r293 294 335 347;g285 311 347 355;r285 311 314 340;r289 316 387 470;g386 409 413 424;r402 409 415 444;g375 387 421 423;r366 395 403 412;g400 402 408 410;g352 361 405 407;r352 358 362 370;r355 358 361 372;g340 358 362 376;g265 276 356 358;g180 181 277 278;r138 181 255 291;g203 210 253 268;g136 153 213 222;g138 144 153 166;r142 144 156 172;g88 115 153 167;r105 112 185 221;r183 184 237 252;g136 145 239 260;r142 144 212 217;r210 213 260 283;r240 259 268 269;r267 270 456 492;g402 409 457 461;r342 405 446 450;r420 450 480 493;r467 481 614 783;r570 613 698 731;d604 697 698 717;g320 536 697 718;r500 537 618 627;r586 617 632 650;g612 613 631 647;r600 613 622 627;g444 511 622 630;r500 511 560 568;r472 556 646 657;r642 644 692 735;r640 691 920 928;g832 880 918 932;g834 836 883 912;g790 825 830 851;g759 811 828 852;r766 808 850 900;g757 814 848 886;r811 817 838 848;g717 738 843 861;g697 729 740 742;r702 728 835 884;g582 645 836 881;g546 640 646 866;r580 646 757 818;r642 757 805 809;r694 806 814 842;r741 814 830 896;r790 829 902 975;g837 844 902 1005;r834 844 947 968;g737 741 950 993` }
];

const secondary = [
  { first: 0, y: 110, k: 2.412, bars: `m0 0 90 92;m40 51 148 165;m122 142 268 305;m220 262 392 414;o260 282 385 414;m262 277 363 420;m360 369 424 446;o417 417 428 598;m390 422 467 467;m433 458 704 725;m660 706 747 747;m670 738 853 862;m832 848 875 952;o777 789 880 887;m760 783 843 847;o820 832 852 870;m835 842 914 930;m873 914 938 950;m930 931 963 990;m962 965 1006 1020;m950 996 1010 1010;m1008 1008 1058 1080;m1048 1062 1180 1206;m1175 1180 1228 1240;m1222 1226 1242 1264;o1200 1210 1247 1254;m1190 1200 1225 1240;m1195 1200 1264 1275;m1245 1272 1305 1323;m1298 1298 1308 1335;m1298 1299 1340 1380;m1327 1330 1487 1490;o1422 1423 1483 1510;m1412 1428 1450 1487;m1450 1470 1500 1510;o1462 1485 1487 1508;m1300 1305 1374 1385;m1350 1368 1458 1478;o1400 1430 1450 1475;m1422 1424 1455 1465;m1424 1440 1466 1487;o1440 1458 1460 1482;o1386 1424 1455 1456;o1348 1358 1418 1434;m1330 1358 1368 1372;o1328 1350 1358 1368;o1324 1345 1347 1360;o1314 1345 1347 1372;m1334 1341 1381 1382;o1318 1336 1386 1402;o1333 1346 1348 1370;o1320 1345 1347 1378;m1332 1334 1338 1355;o1318 1328 1340 1342;o1304 1318 1334 1348;o1290 1293 1327 1330;m1273 1300 1327 1330;m1310 1327 1360 1392;o1303 1330 1353 1357;m1333 1345 1380 1385;m1340 1376 1380 1385;m1280 1346 1394 1426;o1270 1306 1396 1425;m1304 1326 1350 1380;m1290 1295 1350 1370;m1300 1328 1375 1380;o1240 1262 1380 1390;o1195 1226 1250 1260;m1142 1218 1325 1325;m1310 1325 1345 1350;m1315 1344 1364 1375;o1336 1340 1362 1510;m1300 1330 1362 1364;o1242 1255 1316 1318;m1235 1250 1284 1300;o1197 1262 1275 1275;o1205 1262 1270 1272;o1175 1175 1268 1272;m1160 1195 1205 1250;m1170 1175 1235 1250;o1160 1228 1242 1248;o1158 1226 1230 1252;m1175 1210 1222 1252;m1175 1210 1230 1250;o1130 1150 1220 1225;o1100 1128 1148 1150;o950 972 1112 1130;o868 896 956 958;m832 885 902 930;o813 885 897 928;o830 852 880 902;o820 864 868 902;m812 868 875 935;o840 842 880 920;m810 850 975 976;m933 960 1008 1040;o880 914 1018 1020;o820 835 914 920;m832 832 984 990;o870 894 994 1010;m864 900 930 932;m912 930 1102 1105;m1092 1105 1110 1130;o1062 1070 1125 1130;m1070 1084 1104 1112;o1068 1090 1130 1130;m1056 1115 1120 1125;m1120 1143 1178 1178;o1150 1164 1182 1190;o1100 1108 1173 1175;o1100 1110 1112 1140;m1110 1112 1285 1288;m1228 1230 1286 1290;o1245 1250 1285 1290;o1225 1226 1244 1265;o1182 1198 1222 1235;o1152 1158 1198 1200;o1165 1166 1168 1183;m1155 1170 1183 1205;m1182 1184 1204 1206;m1182 1184 1206 1246;o1175 1182 1204 1215;o1058 1078 1182 1185;m1078 1084 1120 1130;o1080 1107 1123 1134;o1070 1070 1118 1130;m1070 1072 1120 1122;o1070 1078 1124 1124;m1078 1090 1096 1122;o1078 1100 1102 1110;o1090 1100 1104 1112;m1104 1105 1120 1124;m1108 1115 1125 1130;m1110 1113 1145 1145;m1135 1137 1143 1150;o1122 1130 1146 1160;o1130 1133 1138 1155;o1125 1130 1134 1155;o1108 1122 1132 1134;m1130 1132 1158 1162;m1144 1155 1170 1182;m1155 1164 1170 1180;m1152 1165 1210 1220;o1145 1172 1204 1205;o1140 1170 1198 1200;o1057 1058 1186 1212;o970 1012 1062 1064;m972 1008 1038 1080;o965 988 1042 1080` },
  { first: 149, y: 90, k: 2.529, bars: `o925 962 1081 1092;o900 916 960 986;m900 908 935 982;m900 938 946 1026;m925 946 968 990;o926 955 968 1010;m926 947 990 1036;o932 978 996 1020;m942 970 1026 1042;o933 988 1018 1050;m978 1000 1060 1080;m1033 1062 1081 1105;m1040 1072 1196 1196;m1141 1186 1210 1228;o1118 1125 1216 1216;o1047 1126 1133 1143;o1034 1080 1119 1120;m1070 1072 1110 1161;o978 1000 1105 1110;m900 989 1026 1059;m965 1028 1064 1072;o1000 1007 1060 1114;m966 1010 1072 1103;m1046 1058 1105 1152;m1080 1095 1206 1222;m1214 1214 1295 1328;m1248 1298 1320 1352;m1310 1310 1358 1487;o1290 1305 1363 1444;o1208 1292 1312 1340;m1282 1305 1533 1560;o1410 1444 1527 1575;m1360 1443 1452 1473;m1442 1444 1454 1492;o1410 1411 1444 1555;o1372 1374 1424 1470;m1373 1378 1430 1446;m1400 1420 1500 1505;o1430 1462 1505 1512;o1402 1406 1454 1522;o1398 1402 1420 1487;o1338 1373 1410 1412;o1354 1356 1382 1454;o1333 1338 1363 1366;o1280 1282 1335 1348;o1227 1249 1280 1286;o1225 1237 1257 1270;o1192 1194 1242 1265;m1180 1186 1198 1222;m1194 1196 1228 1242;o1180 1194 1239 1240;m1195 1196 1230 1240;m1215 1228 1251 1262;o1218 1238 1239 1240;o1172 1174 1235 1240;o1170 1194 1227 1232;o1125 1130 1184 1186;o1056 1057 1128 1130;m1048 1062 1138 1145;m1125 1130 1206 1210;o1172 1204 1211 1216;m1194 1194 1275 1300;o1240 1259 1280 1306;m1258 1265 1290 1306;o1266 1272 1296 1298;m1258 1259 1275 1296;m1276 1277 1294 1325;m1305 1305 1363 1365;o1350 1351 1353 1358;m1340 1343 1376 1382;o1342 1343 1386 1387;m1332 1351 1363 1365;m1365 1366 1413 1415;o1360 1366 1410 1443;m1362 1362 1386 1412;m1370 1396 1430 1477;o1328 1338 1436 1438;m1328 1343 1368 1400;m1360 1373 1463 1477;o1400 1441 1459 1462;o1410 1429 1454 1468;o1383 1420 1443 1462;o1360 1396 1425 1426;o1282 1343 1392 1420;m1318 1351 1368 1410;m1350 1373 1398 1421;o1342 1351 1404 1430;o1345 1350 1357 1400;o1237 1318 1357 1376;o1228 1237 1330 1362;o1158 1194 1229 1262;m1148 1196 1206 1216;o978 1024 1200 1202;o943 966 1029 1060;m955 970 1012 1036;o942 979 1004 1026;o820 900 974 984;o780 820 893 910;m810 825 888 905;o860 870 880 905;o775 814 867 882;m765 818 845 890;m790 830 880 925;m810 842 890 912;o800 807 895 936;o740 800 802 850;o680 696 794 800;m575 692 794 800;o612 690 788 790;m605 610 690 720;m675 678 731 788;o607 708 714 760;o616 622 704 755;o572 584 632 716;o470 516 597 598;o250 268 507 508;m180 262 293 325;m295 296 395 430;m382 384 410 486;o360 404 416 440;o345 369 400 405;o320 347 382 384;o300 346 352 370;m325 352 395 405;m392 405 440 450` },
  { first: 274, y: 80, k: 3, bars: `o455 457 542 544;m440 462 516 528;o455 483 508 564;m480 486 524 526;o450 458 520 522;o348 362 465 478;o335 338 366 400;m338 340 376 386;o300 323 370 378;o225 240 335 350;m234 235 296 320;m285 288 378 392;m364 380 415 425;m373 408 422 422;m298 310 350 377;o280 289 328 345;o280 283 314 328;o255 258 313 318;m262 264 310 345;o322 336 340 350;o310 320 330 332;o262 266 328 330;m266 270 292 304;o278 280 305 315;m268 287 302 312;m282 291 295 302;o284 288 300 320;o265 280 302 304;m256 261 270 288;m265 276 280 286;m252 265 276 285;o240 244 273 284;o228 232 244 254;m230 234 276 300;m255 292 322 350;m296 318 366 380;o300 310 366 376;m330 340 376 378;o297 322 376 390;m302 327 356 388;m350 361 400 424;m364 370 412 430;m418 420 450 540;o430 454 460 540;m446 448 552 568;m560 568 634 671;o562 602 634 710;o573 592 605 632;o510 538 592 632;o456 463 544 548;o374 376 470 472;o364 366 382 384;m374 376 388 400;o284 346 384 446;o278 300 350 364;m274 312 415 446;o368 393 422 434;m298 362 390 394;m334 376 498 510;m490 510 658 663;o642 648 650 711;o602 615 646 660;o568 587 612 716;m549 582 618 624;m560 622 634 645;m600 634 766 820;m737 778 845 926;m816 835 858 910;o730 777 846 885;o450 640 790 795;o360 388 638 645;m268 402 444 480;m380 456 530 540;o460 520 635 660;m430 520 610 644;m430 522 600 620;o510 538 622 634;o438 442 530 552;o280 402 436 468;o250 256 415 420;o178 190 270 284;o156 161 182 250;m135 166 218 238;o200 201 227 236;m202 208 255 264;m256 267 290 302;m266 276 323 340;o278 290 312 338;m266 288 310 322;o216 238 310 312;m219 225 228 262;o225 237 242 266;o220 226 249 256;o190 201 248 254;m190 193 311 318;m292 315 336 348;m316 328 350 351;o268 310 340 342` }
];

const outline = { g: '#008000', r: '#000', d: '#0f0', o: '#ffc253', m: '#87dab0' };
const inner = { g: '#0f0', r: '#f00', d: '#0f0' };
const box = (x, y, w, h, fill) => `<rect x="${x}" y="${y}" width="${w}" height="${Math.max(1, h)}" fill="${fill}"/>`;

function drawBars(id, blocks, width) {
  let out = '';
  for (const block of blocks) {
    block.bars.split(';').forEach((bar, n) => {
      const kind = bar[0];
      const [high, top, bottom, low] = bar.slice(1).split(' ').map(v => Math.round(block.y + v / block.k));
      const x = 5 + 4 * (block.first + n);
      const left = x - (width >> 1);
      out += box(x, high, 1, low - high, outline[kind]) + box(left, top, width, bottom - top, outline[kind]);
      if (inner[kind] && bottom - top > 2) out += box(x, top + 1, 1, bottom - top - 2, inner[kind]);
    });
  }
  const group = document.getElementById(id);
  group.setAttribute('class', 'bars');
  group.innerHTML = out;
}

// Indicator curves, in three blocks that follow one another along the time axis.
const blocks = [{ x: 0, k: 2.45 }, { x: 620, k: 2.45 }, { x: 1240, k: 2.306 }];
const curves = [
  ['#ffd700', '', [
    '12,366 40,383 65,390 100,380 155,365 200,352 240,349 290,350 325,330 350,310 375,292 400,286 435,287 460,303 490,314 510,312 530,304 560,304 600,316 625,318 660,345 700,378 735,402 755,410 775,410 800,395 840,382 855,385 885,382 905,375 950,343 990,315 1020,302 1045,297 1095,303 1120,317 1165,345 1200,361 1245,382 1285,403 1310,409 1350,406 1380,385 1420,350 1460,310 1500,270 1517,258',
    '0,255 18,247 45,225 75,195 100,183 130,175 160,175 200,188 230,198 270,202 310,225 345,245 375,257 405,262 440,260 540,263 575,268 620,271 655,265 690,278 740,330 780,360 830,385 860,415 900,440 945,478 995,475 1040,450 1090,390 1160,365 1200,335 1245,318 1285,298 1310,304 1345,304 1380,313 1430,335 1490,338 1515,332',
    '0,331 20,328 60,324 105,312 145,280 180,257 210,250 245,252 275,275 300,305 340,335 370,342 400,360 430,388 470,425 495,443 520,456 545,462 574,458']],
  ['#0000ff', '', [
    '12,253 25,265 42,303 65,328 85,312 105,288 125,267 150,253 290,253 307,222 327,210 347,180 366,155 390,142 500,146 560,137 600,127 625,127 660,152 685,190 710,240 740,280 760,291 775,282 800,255 835,238 855,242 885,233 930,217 955,193 990,203 1015,190 1040,201 1090,196 1110,184 1145,186 1190,198 1210,213 1250,232 1270,253 1285,273 1308,283 1325,277 1335,267 1345,270 1365,215 1390,165 1405,132 1435,92 1470,68 1500,51 1518,47',
    '0,49 25,49 80,70 130,100 165,100 205,115 225,132 265,136 305,124 318,115 350,119 375,122 405,145 445,140 465,145 490,142 550,146 585,156 620,155 652,163 672,148 705,113 722,102 740,107 775,143 808,165 860,210 890,245 925,305 945,337 1000,315 1045,275 1090,212 1115,188 1145,172 1165,155 1188,141 1205,150 1238,153 1280,198 1370,199 1395,213 1430,246 1470,256 1495,252 1515,236',
    '0,234 12,223 80,219 103,212 125,182 145,168 185,137 235,139 250,124 280,105 295,97 325,115 400,121 420,137 440,180 455,205 475,250 495,303 512,316 520,335 535,352 550,364 567,360 574,354']],
  ['#0000ff', '', [
    '12,482 25,483 42,462 62,451 95,459 130,475 170,470 205,448 258,443 307,456 360,440 395,427 430,427 445,440 460,470 485,481 505,481 525,471 565,470 590,486 605,503 620,506 640,532 670,549 710,543 755,534 775,535 800,525 840,528 885,531 905,525 935,497 955,489 985,450 1010,420 1035,396 1055,396 1085,410 1110,440 1140,475 1190,523 1210,523 1230,538 1257,550 1290,537 1320,535 1335,543 1347,541 1365,570 1405,580 1435,570 1470,530 1505,490 1517,470',
    '0,465 25,440 50,390 70,335 110,278 132,248 185,260 205,268 262,265 290,300 320,352 345,378 368,386 400,380 600,380 620,385 655,370 690,430 720,515 755,579 835,587 872,616 925,617 940,621 960,619 980,628 1005,628 1040,611 1075,581 1140,578 1170,570 1205,518 1238,492 1265,425 1288,397 1305,408 1350,412 1393,427 1465,418 1515,429',
    '0,430 12,433 50,430 75,420 108,410 125,412 165,393 190,372 215,357 234,362 260,410 275,445 300,510 330,543 365,558 385,578 415,615 450,622 480,600 495,580 525,564 550,559 574,562']],
  ['#ff0000', '', [
    '12,401 25,405 45,402 65,385 85,350 105,300 125,264 155,265 175,290 190,320 210,350 235,357 258,362 290,392 305,345 327,300 345,230 357,182 370,174 388,171 405,188 425,225 443,270 463,355 480,390 492,404 504,409 520,365 532,330 545,313 560,310 575,330 590,380 602,415 620,455 636,486 658,486 677,467 692,465 710,455 735,430 755,416 775,370 800,310 820,280 838,272 855,280 880,280 895,282 908,289 930,278 950,270 968,260 985,268 1005,270 1015,263 1030,285 1050,315 1065,350 1085,410 1105,437 1130,458 1150,461 1165,469 1175,475 1190,470 1210,450 1230,452 1248,456 1275,440 1290,415 1305,390 1320,355 1345,285 1360,220 1380,160 1395,135 1410,125 1435,138 1450,143 1470,171 1495,168 1515,178',
    '0,186 15,192 42,210 60,196 75,178 95,170 120,177 145,210 165,212 185,230 203,245 220,236 240,232 258,205 272,220 298,275 318,345 335,370 357,378 375,350 400,280 420,240 445,198 465,205 490,208 512,232 540,242 560,253 590,240 605,258 632,292 655,345 690,425 710,490 732,555 745,571 758,568 772,530 790,470 808,405 825,385 840,390 860,440 876,488 895,497 912,525 940,530 958,500 980,420 1005,350 1025,338 1043,338 1060,290 1080,240 1100,223 1120,230 1138,252 1160,257 1190,250 1210,278 1235,325 1255,362 1275,364 1300,363 1315,360 1330,368 1345,375 1360,380 1400,376 1425,360 1450,335 1475,300 1500,260 1515,235',
    '0,232 12,218 32,240 50,280 75,322 90,315 105,295 123,245 140,220 160,175 180,157 190,180 208,195 225,235 240,300 255,365 270,410 285,460 299,510 330,511 345,500 362,445 378,450 398,472 410,480 425,500 437,512 445,512 458,490 474,463 486,453 500,410 512,390 525,385 548,398 560,420 568,438 574,432']],
  ['#008000', 'rsi', [
    '12,408 24,427 42,376 52,362 63,362 72,303 82,269 91,279 101,243 111,243 130,253 142,275 150,283 160,308 170,340 180,363 190,378 200,369 210,352 220,348 229,341 238,345 250,383 258,388 268,414 278,430 289,415 298,300 307,184 317,208 327,240 337,194 347,145 356,134 366,134 375,178 386,205 406,248 425,282 435,306 445,380 455,455 464,500 474,440 485,380 494,356 504,350 513,313 523,271 533,282 543,284 553,300 562,350 572,416 582,470 591,495 601,514 611,477 621,431 631,472 641,507 650,488 661,486 671,460 681,423 690,424 699,458 709,463 719,434 729,415 739,408 749,382 759,352 778,295 788,272 798,258 808,254 818,276 836,276 848,311 857,314 866,275 876,241 886,262 896,295 906,320 915,316 926,275 935,243 944,229 953,223 965,250 975,290 985,330 995,308 1004,250 1013,206 1023,245 1034,340 1043,387 1052,424 1062,441 1073,436 1085,430 1100,432 1110,465 1120,492 1132,491 1142,464 1150,447 1160,471 1171,470 1180,461 1190,489 1199,450 1209,392 1219,440 1228,473 1240,470 1248,473 1258,465 1268,410 1277,355 1290,358 1300,350 1318,332 1328,265 1336,199 1346,200 1356,155 1366,92 1375,120 1386,156 1395,128 1405,99 1415,120 1425,163 1436,150 1445,152 1460,193 1472,195 1482,170 1493,153 1503,186 1518,187',
    '0,187 12,244 24,244 42,190 52,175 62,133 72,110 82,165 91,210 102,220 112,212 122,191 134,191 141,200 150,229 162,231 172,237 184,258 199,258 208,228 218,200 232,206 240,200 250,180 260,195 270,248 278,301 298,368 308,398 318,414 328,390 344,367 356,329 366,324 376,295 386,235 396,205 405,192 416,213 426,205 435,190 445,176 455,205 464,230 474,230 490,211 500,225 512,254 534,258 552,243 572,245 582,228 591,218 602,265 622,366 632,366 641,347 651,360 661,375 670,440 680,490 690,510 699,535 709,570 720,618 730,617 744,570 755,515 767,425 777,372 797,378 808,352 817,395 827,433 837,403 846,455 856,535 867,567 877,548 888,493 897,482 905,486 916,535 925,577 935,575 945,528 954,440 964,345 974,284 985,320 994,368 1005,360 1024,358 1034,310 1043,275 1054,225 1063,205 1072,197 1085,210 1100,228 1112,252 1122,272 1138,271 1150,250 1160,239 1188,242 1200,300 1209,352 1218,369 1238,366 1249,378 1259,366 1268,341 1278,363 1290,360 1297,352 1306,384 1316,382 1327,368 1339,388 1350,375 1369,386 1380,366 1392,358 1408,358 1425,335 1434,318 1444,323 1454,316 1464,283 1480,254 1494,246 1503,202 1513,190',
    '0,203 13,203 22,262 32,325 41,343 52,325 59,324 68,331 78,300 87,276 103,275 113,220 123,140 133,165 142,205 150,175 160,150 170,152 178,151 188,200 197,263 216,262 225,320 234,347 243,420 252,462 263,452 270,470 280,510 289,560 298,578 308,510 317,457 326,477 344,471 353,430 363,400 373,432 382,475 391,525 400,554 410,522 426,492 445,491 455,481 465,438 474,396 483,420 492,408 501,327 511,352 520,400 528,415 536,425 547,447 566,446 574,410']]
];

drawBars('secondary', secondary, 4);
drawBars('primary', primary, 3);

document.getElementById('tdi-lines').innerHTML = curves.map(([color, name, parts]) => {
  const points = parts.flatMap((part, n) => part.split(' ').map(pair => {
    const [x, y] = pair.split(',');
    return `${(blocks[n].x + x / blocks[n].k).toFixed(1)},${(755 + y / 3).toFixed(1)}`;
  }));
  return `<polyline class="curve ${name}" stroke="${color}" points="${points.join(' ')}"/>`;
}).join('');

// Scale of the correlated symbol, drawn inside the plot.
let scale = '';
for (let n = 0; n < 10; n++) {
  scale += `<text x="137" y="${Math.round(152 + n * 62.25)}">${(95.975 + n * 0.07).toFixed(3)}</text>`;
}
document.getElementById('index-scale').innerHTML = scale;

// Price scale to the right of the plot.
let axis = '';
for (let n = 0; n < 20; n++) {
  const y = Math.round(32 + n * 34.05);
  axis += `<path d="M0 ${y + 0.5}h3"/><text x="5" y="${y + 4}">${(1.1344 - n * 0.00045).toFixed(5)}</text>`;
}
axis += '<rect class="price-tag" x="1" y="248" width="41" height="11"/><text class="price-now" x="5" y="257">1.13147</text>';
document.getElementById('price-axis').innerHTML = axis;
```
